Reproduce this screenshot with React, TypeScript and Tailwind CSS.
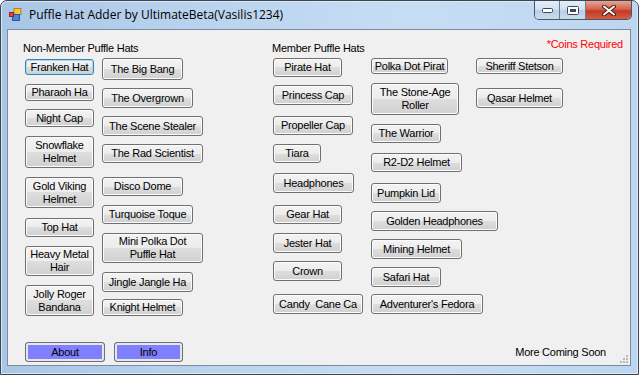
import React from "react";

type B = { t: string; c: string; f?: boolean };

const col1: B[] = [
  { t: "Franken Hat", c: "mt-[1px] w-[69px] h-[16px]", f: true },
  { t: "Pharaoh Ha", c: "mt-[9px] w-[69px] h-[17px]" },
  { t: "Night Cap", c: "mt-[8px] w-[69px] h-[18px]" },
  { t: "Snowflake|Helmet", c: "mt-[9px] w-[69px] h-[32px]" },
  { t: "Gold Viking|Helmet", c: "mt-[9px] w-[69px] h-[31px]" },
  { t: "Top Hat", c: "mt-[10px] w-[69px] h-[19px]" },
  { t: "Heavy Metal|Hair", c: "mt-[9px] w-[69px] h-[30px]" },
  { t: "Jolly Roger|Bandana", c: "mt-[9px] w-[69px] h-[31px]" },
];

const col2: B[] = [
  { t: "The Big Bang", c: "mt-[0px] w-[81px] h-[22px]" },
  { t: "The Overgrown", c: "mt-[8px] w-[91px] h-[20px]" },
  { t: "The Scene Stealer", c: "mt-[8px] w-[101px] h-[20px]" },
  { t: "The Rad Scientist", c: "mt-[8px] w-[101px] h-[19px]" },
  { t: "Disco Dome", c: "mt-[14px] w-[81px] h-[19px]" },
  { t: "Turquoise Toque", c: "mt-[9px] w-[91px] h-[19px]" },
  { t: "Mini Polka Dot|Puffle Hat", c: "mt-[9px] w-[101px] h-[30px]" },
  { t: "Jingle Jangle Ha", c: "mt-[9px] w-[91px] h-[20px]" },
  { t: "Knight Helmet", c: "mt-[7px] w-[81px] h-[17px]" },
];

const col3: B[] = [
  { t: "Pirate Hat", c: "mt-[0px] w-[69px] h-[19px]" },
  { t: "Princess Cap", c: "mt-[8px] w-[80px] h-[20px]" },
  { t: "Propeller Cap", c: "mt-[11px] w-[80px] h-[19px]" },
  { t: "Tiara", c: "mt-[9px] w-[48px] h-[19px]" },
  { t: "Headphones", c: "mt-[10px] w-[81px] h-[20px]" },
  { t: "Gear Hat", c: "mt-[12px] w-[69px] h-[19px]" },
  { t: "Jester Hat", c: "mt-[9px] w-[69px] h-[20px]" },
  { t: "Crown", c: "mt-[8px] w-[69px] h-[20px]" },
  { t: "Candy  Cane Ca", c: "mt-[13px] w-[90px] h-[20px]" },
];

const col4: B[] = [
  { t: "Polka Dot Pirat", c: "mt-[0px] w-[77px] h-[16px]" },
  { t: "The Stone-Age|Roller", c: "mt-[9px] w-[88px] h-[32px]" },
  { t: "The Warrior", c: "mt-[9px] w-[70px] h-[19px]" },
  { t: "R2-D2 Helmet", c: "mt-[10px] w-[91px] h-[19px]" },
  { t: "Pumpkin Lid", c: "mt-[11px] w-[70px] h-[20px]" },
  { t: "Golden Headphones", c: "mt-[8px] w-[127px] h-[20px]" },
  { t: "Mining Helmet", c: "mt-[8px] w-[91px] h-[20px]" },
  { t: "Safari Hat", c: "mt-[8px] w-[70px] h-[20px]" },
  { t: "Adventurer's Fedora", c: "mt-[7px] w-[112px] h-[20px]" },
];

const col5: B[] = [
  { t: "Sheriff Stetson", c: "mt-[0px] w-[87px] h-[16px]" },
  { t: "Qasar Helmet", c: "mt-[14px] w-[87px] h-[20px]" },
];

function WinButton({ b }: { b: B }) {
  const lines = b.t.split("|");
  const base =
    "flex flex-col shrink-0 items-center justify-center text-center leading-[13px] text-[11px] text-black whitespace-pre rounded-[3px] border bg-[linear-gradient(#f3f3f3,#ececec_50%,#dedede_50%,#d0d0d0)]";
  const state = b.f
    ? "border-[#3c7fb1] shadow-[inset_0_0_0_1px_#a7dcf6]"
    : "border-[#707070] shadow-[inset_0_0_0_1px_#fbfbfb]";
  return (
    <div className={`${base} ${state} ${b.c}`}>
      {lines.map((l, i) => (
        <span key={i}>{l}</span>
      ))}
    </div>
  );
}

function Col({ items, w }: { items: B[]; w: string }) {
  return (
    <div className={`flex flex-col items-start ${w}`}>
      {items.map((b) => (
        <WinButton key={b.t} b={b} />
      ))}
    </div>
  );
}

function AppIcon() {
  return (
    <svg width="13" height="13" viewBox="0 0 13 13">
      <rect x="5" y="0.5" width="7" height="6" fill="#f6c43a" stroke="#b08417" strokeWidth="1" />
      <rect x="3.5" y="6.5" width="7" height="6" fill="#4a86d8" stroke="#2a55a0" strokeWidth="1" />
      <rect x="0.5" y="4.5" width="4" height="4" fill="#e0483a" stroke="#9c2218" strokeWidth="1" />
    </svg>
  );
}

export default function App() {
  return (
    <div
      className="w-[640px] h-[375px] overflow-hidden bg-white"
      style={{ fontFamily: '"Liberation Sans", Arial, sans-serif' }}
    >
      <div className="w-[639px] h-[375px] flex flex-col rounded-t-[7px] border border-[#3b4654] bg-[linear-gradient(90deg,#aac6e6,#b9d3ee_30%,#c6ddf4_65%,#bdd6f0)] shadow-[inset_0_0_0_1px_#dbe8f6]">
        {/* Title bar */}
        <div className="h-[28px] flex items-start relative">
          <div className="ml-[8px] mt-[7px]">
            <AppIcon />
          </div>
          <div
            className="ml-[7px] mt-[6px] text-[12px] leading-[16px] text-black"
            style={{ fontFamily: '"Open Sans", "Noto Sans", sans-serif' }}
          >
            Puffle Hat Adder by UltimateBeta(Vasilis1234)
          </div>
          <div className="ml-auto mr-[6px] flex h-[19px] rounded-b-[5px] border border-t-0 border-[#4a5668] overflow-hidden">
            <div className="w-[25px] h-full flex items-center justify-center border-r border-[#6b7a8e] bg-[linear-gradient(#e4eef9,#cfdff0_50%,#b9cde4_50%,#c9dcef)]">
              <svg width="11" height="6" viewBox="0 0 11 6">
                <rect x="0.5" y="1.5" width="10" height="4" rx="1" fill="#ffffff" stroke="#3b4656" />
              </svg>
            </div>
            <div className="w-[26px] h-full flex items-center justify-center border-r border-[#6b7a8e] bg-[linear-gradient(#e4eef9,#cfdff0_50%,#b9cde4_50%,#c9dcef)]">
              <svg width="12" height="9" viewBox="0 0 12 9">
                <rect x="0.5" y="0.5" width="11" height="8" rx="1" fill="#ffffff" stroke="#3b4656" />
                <rect x="3" y="3" width="6" height="3" fill="#3b4656" />
              </svg>
            </div>
            <div className="w-[45px] h-full flex items-center justify-center bg-[linear-gradient(#e8a594,#d2644d_45%,#c23a23_55%,#d65d42)]">
              <svg width="14" height="11" viewBox="0 0 14 11">
                <path d="M2 1.5 L12 9.5 M12 1.5 L2 9.5" stroke="#4a1c14" strokeWidth="4" strokeLinecap="round" />
                <path d="M2 1.5 L12 9.5 M12 1.5 L2 9.5" stroke="#ffffff" strokeWidth="2" strokeLinecap="round" />
              </svg>
            </div>
          </div>
        </div>

        {/* Client area */}
        <div className="ml-[6px] w-[624px] h-[337px] border border-[#7c8ca0] bg-[#f0f0f0] relative">
          <div className="flex flex-col h-full text-[11px] leading-[13px] tracking-[-0.25px] text-black">
            <div className="flex h-[28px] items-start">
              <span className="ml-[15px] mt-[12px] w-[249px]">Non-Member Puffle Hats</span>
              <span className="mt-[12px]">Member Puffle Hats</span>
              <span className="ml-auto mr-[7px] mt-[8px] text-[#ff0000]">*Coins Required</span>
            </div>
            <div className="flex pl-[17px]">
              <Col items={col1} w="w-[77px]" />
              <Col items={col2} w="w-[171px]" />
              <Col items={col3} w="w-[98px]" />
              <Col items={col4} w="w-[105px]" />
              <Col items={col5} w="w-[100px]" />
            </div>
            <div className="mt-auto mb-[3px] flex items-center pl-[17px]">
              <div className="w-[80px] h-[20px] flex items-center justify-center rounded-[3px] border border-[#707070] bg-[#8080ff] shadow-[inset_0_0_0_2px_#e6e6ee]">
                About
              </div>
              <div className="ml-[9px] w-[69px] h-[20px] flex items-center justify-center rounded-[3px] border border-[#707070] bg-[#8080ff] shadow-[inset_0_0_0_2px_#e6e6ee]">
                Info
              </div>
              <span className="ml-auto mr-[24px]">More Coming Soon</span>
            </div>
          </div>
          <svg className="absolute right-[1px] bottom-[1px]" width="10" height="10" viewBox="0 0 10 10">
            <g fill="#b8b8b8">
              <rect x="7" y="1" width="2" height="2" />
              <rect x="4" y="4" width="2" height="2" />
              <rect x="7" y="4" width="2" height="2" />
              <rect x="1" y="7" width="2" height="2" />
              <rect x="4" y="7" width="2" height="2" />
              <rect x="7" y="7" width="2" height="2" />
            </g>
          </svg>
        </div>
      </div>
    </div>
  );
}
